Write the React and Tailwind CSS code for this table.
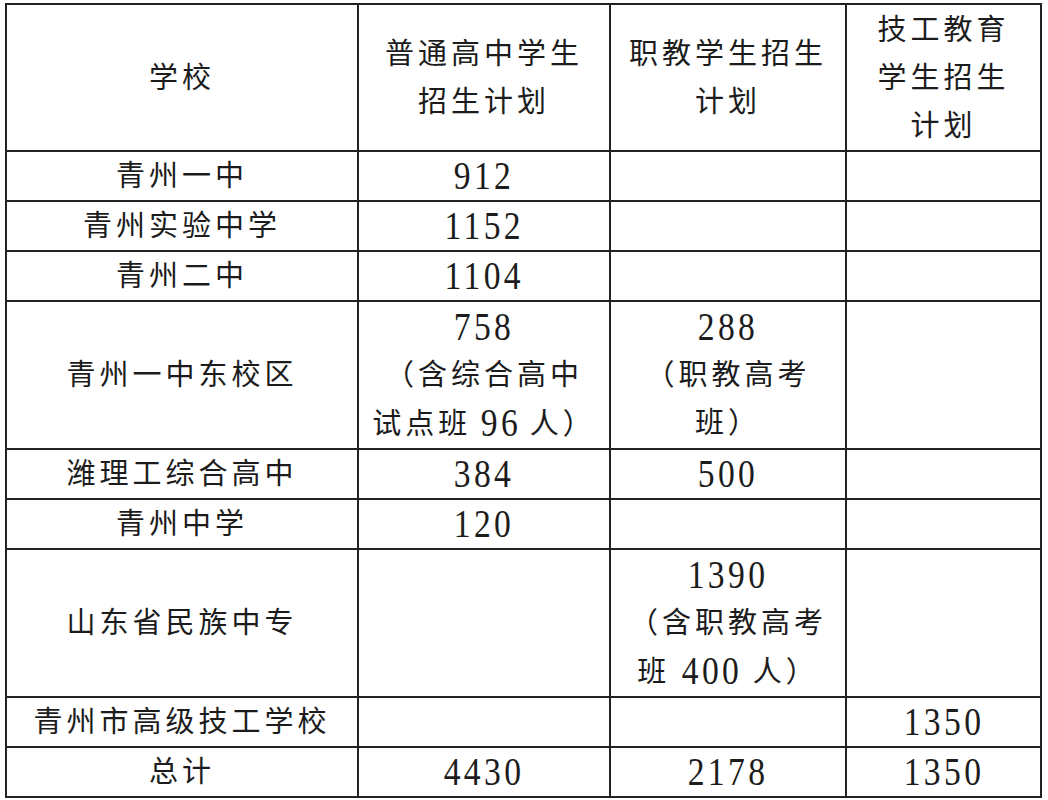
const rows = [
  { h: "h-[49px]", cells: ["青州一中", "912", "", ""] },
  { h: "h-[50px]", cells: ["青州实验中学", "1152", "", ""] },
  { h: "h-[49px]", cells: ["青州二中", "1104", "", ""] },
  {
    h: "h-[148px]",
    cells: [
      "青州一中东校区",
      ["758", "（含综合高中", "试点班 96 人）"],
      ["288", "（职教高考", "班）"],
      "",
    ],
  },
  { h: "h-[50px]", cells: ["潍理工综合高中", "384", "500", ""] },
  { h: "h-[50px]", cells: ["青州中学", "120", "", ""] },
  {
    h: "h-[148px]",
    cells: ["山东省民族中专", "", ["1390", "（含职教高考", "班 400 人）"], ""],
  },
  { h: "h-[49px]", cells: ["青州市高级技工学校", "", "", "1350"] },
  { h: "h-[50px]", cells: ["总计", "4430", "2178", "1350"] },
];

// digits in the scan are tall and narrow
const Line = ({ text }) => (
  <div className="leading-[48px] h-[48px]">
    {text.split(/(\d+)/).map((part, i) =>
      /^\d+$/.test(part) ? (
        <span
          key={i}
          className="inline-block text-[40px] tracking-[4px] scale-x-[0.84] align-[-2px] -mx-[6px]"
        >
          {part}
        </span>
      ) : (
        <span key={i}>{part}</span>
      )
    )}
  </div>
);

const Lines = ({ value }) => {
  const list = Array.isArray(value) ? value : [value];
  return list.map((line, i) => <Line key={i} text={line} />);
};

export default function App() {
  return (
    <div className="w-[1048px] h-[800px] bg-white pt-[3px] pl-[5px] font-['Liberation_Serif','Noto_Sans_CJK_SC',serif] text-[#1c1c1c]">
      <table className="table-fixed border-collapse text-[29px] tracking-[4px]">
        <colgroup>
          <col className="w-[352px]" />
          <col className="w-[252px]" />
          <col className="w-[236px]" />
          <col className="w-[195px]" />
        </colgroup>
        <thead>
          <tr className="h-[147px]">
            <th className="border-2 border-[#222] p-0 font-normal text-center align-middle">
              <Lines value="学校" />
            </th>
            <th className="border-2 border-[#222] p-0 font-normal text-center align-middle">
              <Lines value={["普通高中学生", "招生计划"]} />
            </th>
            <th className="border-2 border-[#222] p-0 font-normal text-center align-middle">
              <Lines value={["职教学生招生", "计划"]} />
            </th>
            <th className="border-2 border-[#222] p-0 font-normal text-center align-middle">
              <Lines value={["技工教育", "学生招生", "计划"]} />
            </th>
          </tr>
        </thead>
        <tbody>
          {rows.map((row, i) => (
            <tr key={i} className={row.h}>
              {row.cells.map((cell, j) => (
                <td
                  key={j}
                  className="border-2 border-[#222] p-0 text-center align-middle"
                >
                  {cell === "" ? null : <Lines value={cell} />}
                </td>
              ))}
            </tr>
          ))}
        </tbody>
      </table>
    </div>
  );
}
